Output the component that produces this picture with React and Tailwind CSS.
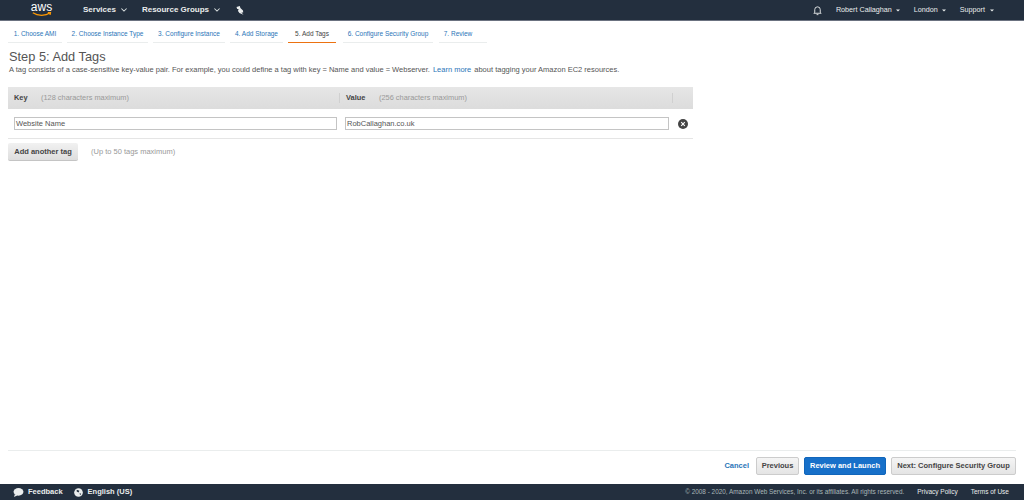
import React from 'react';

const tabs = [
  { label: '1. Choose AMI', w: 'w-[54px]' },
  { label: '2. Choose Instance Type', w: 'w-[81px]' },
  { label: '3. Configure Instance', w: 'w-[72px]' },
  { label: '4. Add Storage', w: 'w-[53px]' },
  { label: '5. Add Tags', w: 'w-[48px]', active: true },
  { label: '6. Configure Security Group', w: 'w-[90px] ml-[2px]' },
  { label: '7. Review', w: 'w-[48px] ml-[1px] pr-[10px]' },
];

const Caret = ({ className }) => (
  <svg viewBox="0 0 6 4" className={className} fill="currentColor"><path d="M0 0.5h6L3 3.5z" /></svg>
);

const Chevron = () => (
  <svg viewBox="0 0 8 5" className="w-[6px] h-[4px] text-[#d5dbdb]" fill="none" stroke="currentColor" strokeWidth="1.4"><path d="M0.5 0.5 4 4l3.5-3.5" /></svg>
);

const App = () => {
  return (
    <div className="w-[1024px] h-[500px] flex flex-col bg-white overflow-hidden font-['Liberation_Sans',Arial,sans-serif] text-[#555]">
      <header className="h-[21px] shrink-0 bg-[#232f3e] border-b border-[#6b7280] flex items-center text-[#eaeded]">
        <div className="w-[83px] flex flex-col items-center shrink-0">
          <span className="text-[12px] leading-[9px] text-white">aws</span>
          <svg viewBox="0 0 24 6" className="w-[22px] h-[5px]" fill="none" stroke="#f90" strokeWidth="1.5"><path d="M1 1c6 4 15 4 21 0" /><path d="M19 0.8l3.2-.2-.6 3" /></svg>
        </div>
        <div className="flex items-center gap-[5px] font-bold text-[8px]">
          <span>Services</span>
          <Chevron />
        </div>
        <div className="flex items-center gap-[5px] font-bold text-[8px] ml-[15px]">
          <span>Resource Groups</span>
          <Chevron />
        </div>
        <svg viewBox="0 0 8 9" className="w-[8px] h-[9px] ml-[16px] text-[#eaeded]" fill="currentColor">
          <path d="M0.5 1 3.8 0 4.4 2 7 4.5 7.2 6.4 5.4 6.4 7.5 8.8 3.4 7 2 5 2.6 3 1.2 3z" />
        </svg>
        <div className="ml-auto flex items-center pr-[30px] text-[7.2px]">
          <svg viewBox="0 0 24 24" className="w-[11px] h-[11px] mr-[13px]" fill="none" stroke="currentColor" strokeWidth="2"><path d="M6 16V10a6 6 0 0 1 12 0v6l2 2H4z" /><path d="M10 21h4" /></svg>
          <span>Robert Callaghan</span>
          <Caret className="w-[4px] h-[3px] ml-[4px] mr-[14px]" />
          <span>London</span>
          <Caret className="w-[4px] h-[3px] ml-[4px] mr-[14px]" />
          <span>Support</span>
          <Caret className="w-[4px] h-[3px] ml-[5px]" />
        </div>
      </header>

      <main className="flex-1 min-h-0 px-[8px]">
        <nav className="flex gap-[5px] h-[22px]">
          {tabs.map((t) => (
            <div
              key={t.label}
              className={`${t.w} flex items-center justify-center pt-[5px] text-[6.5px] border-b ${t.active ? 'border-[#ec7211] text-[#444]' : 'border-[#eaeded] text-[#2a75b8]'}`}
            >
              {t.label}
            </div>
          ))}
        </nav>
        <h1 className="mt-[6px] pl-[1px] text-[12.8px] leading-[16px]">Step 5: Add Tags</h1>
        <p className="text-[7.5px] leading-[10px] pl-[1px] text-[#555]">
          A tag consists of a case-sensitive key-value pair. For example, you could define a tag with key = Name and value = Webserver.
          <span className="text-[#2a75b8] mx-[3px]">Learn more</span>
          about tagging your Amazon EC2 resources.
        </p>

        <div className="w-[685px] mt-[12px]">
          <div className="h-[22px] bg-gradient-to-b from-[#e6e6e6] to-[#dcdcdc] flex items-center text-[7.4px]">
            <div className="w-[331px] pl-[6px] flex">
              <b className="w-[27px] text-[#444]">Key</b>
              <span className="text-[#999]">(128 characters maximum)</span>
            </div>
            <div className="flex-1 flex h-[10px] items-center border-l border-[#d0d0d0]">
              <b className="w-[33px] pl-[6px] box-content text-[#444]">Value</b>
              <span className="text-[#999]">(256 characters maximum)</span>
            </div>
            <div className="w-[21px] h-[10px] border-l border-[#d0d0d0]" />
          </div>
          <div className="h-[30px] border-b border-[#e5e5e5] flex items-center pl-[6px]">
            <div className="w-[323px] h-[13px] border border-[#c4c4c4] flex items-center px-[1px] text-[7.5px]">Website Name</div>
            <div className="w-[324px] h-[13px] ml-[8px] border border-[#c4c4c4] flex items-center px-[1px] text-[7.5px]">RobCallaghan.co.uk</div>
            <svg viewBox="0 0 10 10" className="w-[10px] h-[10px] ml-[9px]">
              <circle cx="5" cy="5" r="5" fill="#444" />
              <path d="M3.2 3.2l3.6 3.6M6.8 3.2L3.2 6.8" stroke="#fff" strokeWidth="1.1" />
            </svg>
          </div>
          <div className="flex items-center mt-[4px]">
            <button className="w-[70px] h-[18px] rounded-[2px] bg-gradient-to-b from-[#f1f1f1] to-[#dedede] border-b border-[#c4c4c4] text-[7.5px] font-bold text-[#444]">Add another tag</button>
            <span className="ml-[13px] text-[7.5px] text-[#999]">(Up to 50 tags maximum)</span>
          </div>
        </div>
      </main>

      <div className="h-[34px] shrink-0 mx-[8px] border-t border-[#eaeded] flex items-center justify-end gap-[5px] pb-[4px] text-[7.5px] font-bold">
        <span className="text-[#2a75b8] mr-[2px]">Cancel</span>
        <button className="w-[43px] h-[18px] rounded-[2px] bg-gradient-to-b from-[#f5f5f5] to-[#e4e4e4] border border-[#ccc] text-[#444]">Previous</button>
        <button className="w-[82px] h-[18px] rounded-[2px] bg-[#1770c9] border border-[#1166bb] text-white">Review and Launch</button>
        <button className="w-[125px] h-[18px] rounded-[2px] bg-gradient-to-b from-[#f5f5f5] to-[#e4e4e4] border border-[#ccc] text-[#444]">Next: Configure Security Group</button>
      </div>

      <footer className="h-[16px] shrink-0 bg-[#232f3e] flex items-center text-[7.5px] font-bold text-[#eaeded] pl-[13px] pr-[15px]">
        <svg viewBox="0 0 12 10" className="w-[11px] h-[9px]" fill="currentColor"><ellipse cx="6" cy="4.3" rx="5.5" ry="4.2" /><path d="M2 7l-1 3 4-2z" /></svg>
        <span className="ml-[4px]">Feedback</span>
        <svg viewBox="0 0 10 10" className="w-[9px] h-[9px] ml-[11px]" fill="currentColor"><circle cx="5" cy="5" r="4.8" /><path d="M3 2l3 1-1 2-2-1zM6 6l2 0-1 2z" fill="#232f3e" /></svg>
        <span className="ml-[5px]">English (US)</span>
        <span className="ml-auto text-[6.4px] font-normal text-[#aab7b8]">© 2008 - 2020, Amazon Web Services, Inc. or its affiliates. All rights reserved.</span>
        <span className="ml-[13px] text-[6.5px] font-normal">Privacy Policy</span>
        <span className="ml-[13px] text-[6.5px] font-normal">Terms of Use</span>
      </footer>
    </div>
  );
};

export default App;
